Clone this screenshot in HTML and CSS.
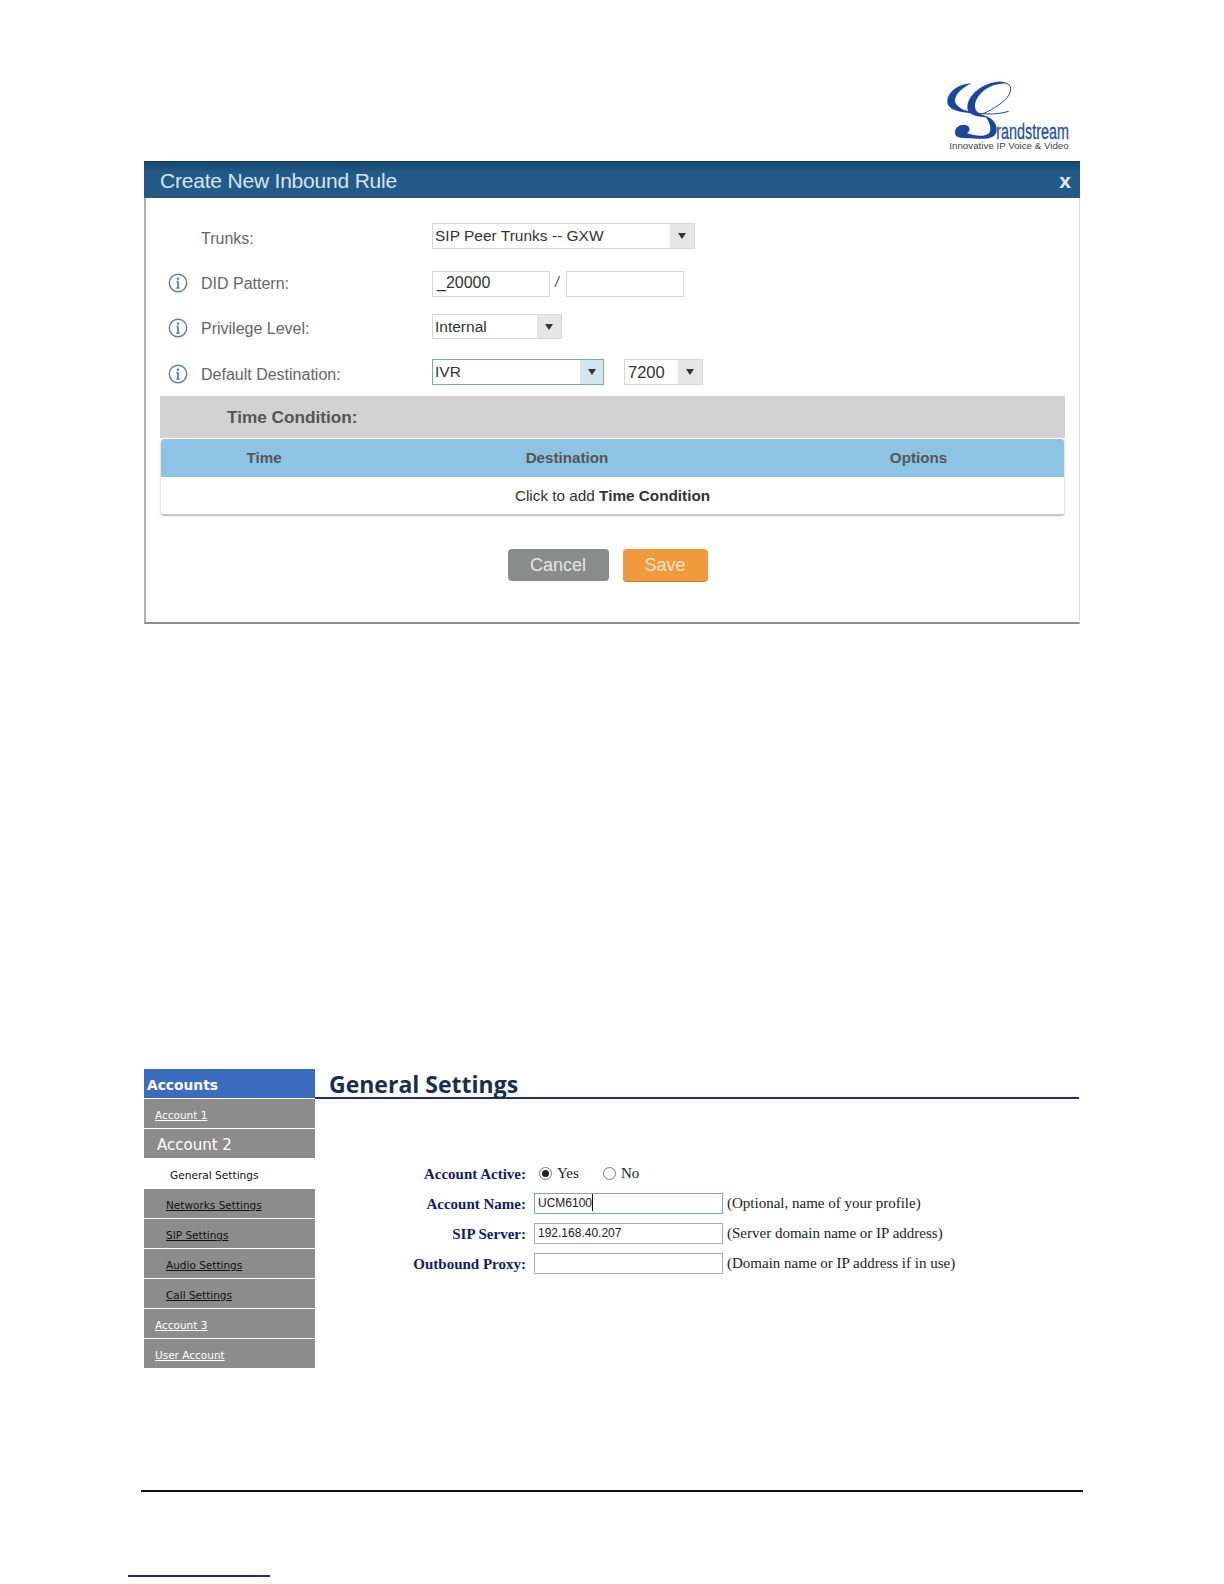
FILE: index.html
```html
<!DOCTYPE html>
<html lang="en">
<head>
<meta charset="utf-8">
<title>Create New Inbound Rule</title>
<link rel="stylesheet" href="styles.css">
</head>
<body>
<div class="page">
  <header class="brand">
    <svg class="logo" viewBox="60 54 405 222" width="135" height="74" role="img" aria-label="Grandstream">
      <path class="logo-g" d="M155 70C110 72 82 100 82 125C82 148 115 156 158 160C125 150 103 135 105 120C107 100 130 82 155 70Z"/>
      <path class="logo-g" d="M232 65C190 70 145 100 142 140C140 162 165 172 212 172C180 165 163 155 165 135C168 105 205 74 240 72C250 71 258 70 262 72C258 66 245 64 232 65Z"/>
      <path class="logo-line" d="M258 70C276 74 274 92 266 106C254 126 225 144 188 162M135 152C180 165 230 165 266 154"/>
      <path class="logo-g" d="M195 168C222 176 232 195 230 212C228 232 205 238 175 236C140 234 105 238 105 218C105 198 128 190 142 197C152 203 150 215 140 219C165 228 195 232 208 218C216 205 208 184 195 168Z"/>
      <text class="logo-name" x="229" y="238" textLength="218" lengthAdjust="spacingAndGlyphs">randstream</text>
      <text class="logo-tag" x="88" y="268" textLength="358" lengthAdjust="spacingAndGlyphs">Innovative IP Voice &amp; Video</text>
    </svg>
  </header>

  <section class="dialog">
    <div class="dialog-head">
      <span class="dialog-title">Create New Inbound Rule</span>
      <span class="dialog-close">x</span>
    </div>
    <div class="dialog-body">
      <div class="row row-trunks">
        <span class="info-slot"></span>
        <span class="row-label label-trunks">Trunks:</span>
        <div class="select select-trunks"><span class="select-value">SIP Peer Trunks -- GXW</span><span class="select-arrow"></span></div>
      </div>
      <div class="row row-did">
        <span class="info-slot"><svg class="info" viewBox="0 0 20 20"><circle cx="10" cy="10" r="8.7"/><path d="M10 8.6V15M8.4 15H11.6M8.6 8.6H10"/><circle class="info-dot" cx="10" cy="5.6" r="1.2"/></svg></span>
        <span class="row-label label-did">DID Pattern:</span>
        <div class="field field-did">_20000</div>
        <span class="slash">/</span>
        <div class="field field-did2"></div>
      </div>
      <div class="row row-priv">
        <span class="info-slot"><svg class="info" viewBox="0 0 20 20"><circle cx="10" cy="10" r="8.7"/><path d="M10 8.6V15M8.4 15H11.6M8.6 8.6H10"/><circle class="info-dot" cx="10" cy="5.6" r="1.2"/></svg></span>
        <span class="row-label">Privilege Level:</span>
        <div class="select select-priv"><span class="select-value">Internal</span><span class="select-arrow"></span></div>
      </div>
      <div class="row row-dest">
        <span class="info-slot"><svg class="info" viewBox="0 0 20 20"><circle cx="10" cy="10" r="8.7"/><path d="M10 8.6V15M8.4 15H11.6M8.6 8.6H10"/><circle class="info-dot" cx="10" cy="5.6" r="1.2"/></svg></span>
        <span class="row-label">Default Destination:</span>
        <div class="select select-dest select-focus"><span class="select-value">IVR</span><span class="select-arrow"></span></div>
        <div class="select select-ext"><span class="select-value">7200</span><span class="select-arrow"></span></div>
      </div>
      <div class="cond-bar">Time Condition:</div>
      <div class="cond-table">
        <div class="cond-head">
          <span>Time</span>
          <span>Destination</span>
          <span class="cond-options">Options</span>
        </div>
        <div class="cond-empty">Click to add <b>Time Condition</b></div>
      </div>
      <div class="actions">
        <span class="btn btn-cancel">Cancel</span>
        <span class="btn btn-save">Save</span>
      </div>
    </div>
  </section>

  <section class="settings">
    <nav class="side">
      <div class="side-title">Accounts</div>
      <a class="side-item">Account 1</a>
      <div class="side-item side-current">Account 2</div>
      <div class="side-active">General Settings</div>
      <a class="side-item side-sub">Networks Settings</a>
      <a class="side-item side-sub">SIP Settings</a>
      <a class="side-item side-sub">Audio Settings</a>
      <a class="side-item side-sub">Call Settings</a>
      <a class="side-item">Account 3</a>
      <a class="side-item">User Account</a>
    </nav>
    <div class="main">
      <h1 class="main-title">General Settings</h1>
      <div class="form">
        <div class="form-label">Account Active:</div>
        <div class="radios">
          <span class="radio radio-on"></span><span class="radio-text">Yes</span>
          <span class="radio"></span><span class="radio-text">No</span>
        </div>
        <div class="form-label">Account Name:</div>
        <div class="input input-focus"><span class="caret">UCM6100</span></div>
        <div class="hint">(Optional, name of your profile)</div>
        <div class="form-label">SIP Server:</div>
        <div class="input">192.168.40.207</div>
        <div class="hint">(Server domain name or IP address)</div>
        <div class="form-label">Outbound Proxy:</div>
        <div class="input"></div>
        <div class="hint">(Domain name or IP address if in use)</div>
      </div>
    </div>
  </section>

  <footer class="foot">
    <div class="foot-rule"></div>
    <div class="foot-link"></div>
  </footer>
</div>
</body>
</html>
```
FILE: styles.css
```css
* { box-sizing: border-box; }
html, body { margin: 0; padding: 0; background: #fff; }
.page { width: 1224px; height: 1584px; overflow: hidden; font-family: "Liberation Sans", Arial, sans-serif; }

/* brand */
.brand { display: flex; justify-content: flex-end; padding: 78px 149px 0 0; height: 161px; }
.logo { display: block; overflow: visible; }
.logo-g { fill: #1c479c; }
.logo-line { fill: none; stroke: #1c479c; stroke-width: 3; }
.logo-name { font-family: "Liberation Sans", Arial, sans-serif; font-size: 68px; fill: #1f4ea1; stroke: #1f4ea1; stroke-width: .8; }
.logo-tag { font-family: "Liberation Sans", Arial, sans-serif; font-size: 25px; fill: #444; }

/* dialog */
.dialog { margin-left: 144px; width: 936px; height: 463px; display: flex; flex-direction: column; }
.dialog-head { height: 37px; flex: none; display: flex; justify-content: space-between; align-items: center; padding: 0 9px 0 16px; background: linear-gradient(#17476e, #235a88 30%, #235a88); border-top: 1px solid #123a5c; }
.dialog-title { font-size: 21px; letter-spacing: -.2px; padding-top: 2px; color: #d5e6f2; }
.dialog-close { font-size: 21px; font-weight: bold; color: #e3f1fa; padding-top: 2px; }
.dialog-body { flex: 1; padding: 25px 14px 0 14px; background: #fff; border-left: 2px solid #b0b0b0; border-right: 1px solid #ddd; border-bottom: 2px solid #8c8c8c; }

.row { display: flex; align-items: center; height: 26px; color: #666; }
.row-trunks { margin-bottom: 22px; }
.row-did { margin-bottom: 17px; }
.row-priv { height: 25px; margin-bottom: 20px; }
.row-dest { margin-bottom: 11px; }
.info-slot { width: 41px; flex: none; display: flex; padding-left: 8px; }
.row-did .info-slot { padding-bottom: 2px; }
.row-priv .info-slot, .row-dest .info-slot { padding-top: 3px; }
.info { width: 20px; height: 20px; display: block; }
.info circle { fill: none; stroke: #5a7f9a; stroke-width: 1.4; }
.info path { fill: none; stroke: #4d7590; stroke-width: 1.6; }
.info .info-dot { fill: #4d7590; stroke: none; }
.row-label { width: 231px; flex: none; font-size: 16px; padding-top: 5px; }
.label-trunks { padding-top: 5px; }
.label-did { padding: 0 0 1px; }

.select { display: flex; height: 100%; border: 1px solid #d6d6d6; background: #fff; }
.select-value { flex: 1; padding-left: 2px; font-size: 15.5px; line-height: 24px; color: #333; }
.select-arrow { width: 24px; flex: none; display: flex; align-items: center; justify-content: center; background: #e6e6e6; }
.select-arrow::before { content: ""; border-left: 4px solid transparent; border-right: 4px solid transparent; border-top: 6px solid #333; }
.select-trunks { width: 263px; }
.select-priv { width: 130px; }
.select-dest { width: 172px; margin-right: 20px; }
.select-dest .select-arrow { width: 23px; }
.select-ext { width: 79px; }
.select-ext .select-value { padding-left: 3px; font-size: 16.5px; }
.select-focus { border-color: #7aa6bb; }
.select-focus .select-arrow { background: #d4e6f0; }

.field { height: 100%; border: 1px solid #d6d6d6; padding-left: 4px; font-size: 16px; line-height: 22px; color: #333; }
.field-did { width: 118px; }
.field-did2 { width: 118px; }
.slash { width: 16px; padding-left: 5px; padding-bottom: 4px; font-size: 14px; font-style: italic; color: #444; }

.cond-bar { height: 42px; padding-left: 67px; background: #d2d2d2; font-size: 17.2px; font-weight: bold; line-height: 43px; color: #555; }
.cond-table { margin-top: 1px; border-radius: 4px; overflow: hidden; box-shadow: 0 1px 1px #bbb; border-bottom: 1px solid #ccc; border-left: 1px solid #e6e6e6; border-right: 1px solid #e6e6e6; }
.cond-head { display: grid; grid-template-columns: 206px 400px 1fr; height: 38px; background: #8dc3e3; font-size: 15.2px; font-weight: bold; line-height: 37px; color: #555; text-align: center; }
.cond-options { padding-left: 6px; }
.cond-empty { height: 37px; text-align: center; font-size: 15.3px; line-height: 37px; color: #333; background: #fff; }
.cond-empty b { color: #333; }

.actions { display: flex; justify-content: center; gap: 14px; margin-top: 34px; padding-right: 10px; }
.btn { height: 32px; border-radius: 4px; text-align: center; font-size: 18px; line-height: 33px; color: #e6e6e6; }
.btn-cancel { width: 101px; background: #8a8c8c; }
.btn-save { width: 85px; background: #ee9a3d; color: #fbe5cc; box-shadow: 0 1px 0 #c87f2e; }

/* settings */
.settings { display: flex; margin: 445px 0 0 144px; width: 935px; height: 298px; }
.side { width: 171px; flex: none; font-family: "DejaVu Sans", Verdana, sans-serif; }
.side-title { height: 29px; margin-bottom: 1px; padding-left: 3px; background: #3b6cc0; color: #fff; font-size: 13.8px; font-weight: bold; line-height: 32px; }
.side-item { display: block; height: 29px; margin-bottom: 1px; padding-left: 11px; background: #8c8c8c; color: #fff; font-size: 10.5px; line-height: 32px; text-decoration: underline; }
.side-current { padding-left: 13px; font-size: 15px; line-height: 33px; text-decoration: none; }
.side-sub { padding-left: 22px; color: #111; }
.side-active { height: 30px; padding-left: 26px; font-size: 10.6px; line-height: 33px; color: #111; }

.main { flex: 1; min-width: 0; }
.main-title { height: 30px; margin: 0; padding-left: 14px; border-bottom: 2px solid #1f2a80; font-family: "Open Sans", sans-serif; font-size: 23px; font-weight: 700; line-height: 30px; color: #1c2c50; }
.form { display: grid; grid-template-columns: 211px 189px 1fr; column-gap: 8px; grid-auto-rows: 30px; align-items: center; margin-top: 60px; font-family: "Liberation Serif", "Times New Roman", serif; font-size: 15px; color: #222; }
.form-label { text-align: right; font-weight: bold; color: #17176b; }
.radios { grid-column: 2 / 4; display: flex; align-items: center; padding: 0 0 2px 5px; }
.radio { width: 13px; height: 13px; flex: none; border: 1px solid #777; border-radius: 50%; background: #fff; display: flex; align-items: center; justify-content: center; }
.radio-on::before { content: ""; width: 7px; height: 7px; border-radius: 50%; background: #222; }
.radio-text { width: 51px; padding-left: 5px; flex: none; }
.input { height: 21px; margin-bottom: 2px; border: 1px solid #a9a9a9; padding-left: 3px; font-family: "Liberation Sans", Arial, sans-serif; font-size: 12px; line-height: 19px; color: #222; }
.input-focus { border-color: #7aa7c7; }
.caret { border-right: 1px solid #111; display: inline-block; height: 17px; line-height: 19px; }
.hint { margin: 0 0 2px -4px; white-space: nowrap; }

/* footer */
.foot { margin: 0; }
.foot-rule { margin: 123px 0 0 141px; width: 942px; height: 2px; background: #111; }
.foot-link { margin: 83px 0 0 128px; width: 142px; height: 2px; background: #1f2a80; }
```
